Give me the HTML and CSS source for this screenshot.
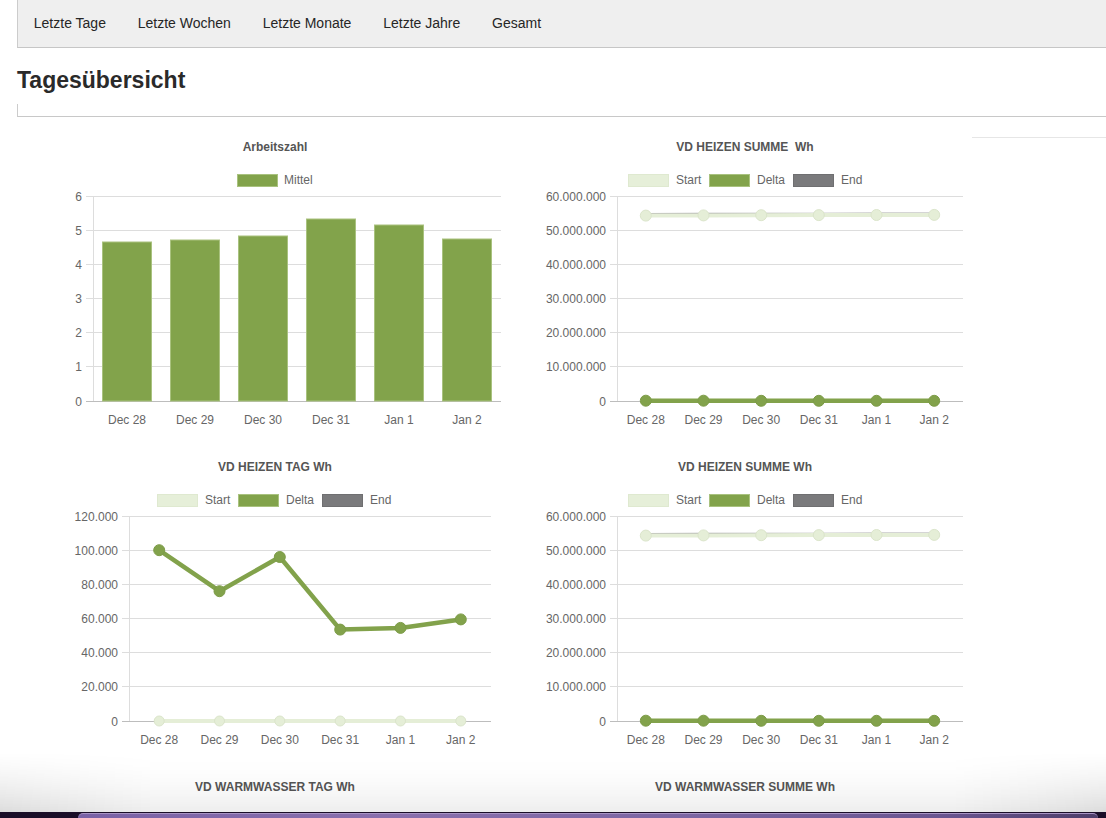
FILE: index.html
```html
<!DOCTYPE html>
<html lang="de">
<head>
<meta charset="utf-8">
<title>Tagesübersicht</title>
<link rel="stylesheet" href="styles.css">
</head>
<body>
<nav class="nav">
  <a class="nav-item">Letzte Tage</a>
  <a class="nav-item">Letzte Wochen</a>
  <a class="nav-item">Letzte Monate</a>
  <a class="nav-item">Letzte Jahre</a>
  <a class="nav-item">Gesamt</a>
</nav>
<h1 class="page-title">Tagesübersicht</h1>
<div class="rule"></div>

<main class="charts">
  <!-- Chart 1: Arbeitszahl -->
  <svg class="chart" width="470" height="320" viewBox="0 0 470 320">
    <text class="ct" x="235" y="33.5">Arbeitszahl</text>
    <rect class="lg-delta" x="197.5" y="57.5" width="40" height="12"/>
    <text class="lt" x="244" y="67">Mittel</text>
    <g class="grid">
      <line x1="46" x2="461" y1="79.5" y2="79.5"/>
      <line x1="46" x2="461" y1="113.5" y2="113.5"/>
      <line x1="46" x2="461" y1="147.5" y2="147.5"/>
      <line x1="46" x2="461" y1="181.5" y2="181.5"/>
      <line x1="46" x2="461" y1="215.5" y2="215.5"/>
      <line x1="46" x2="461" y1="249.5" y2="249.5"/>
      <line x1="53.5" x2="53.5" y1="79" y2="284"/>
    </g>
    <line class="zero" x1="46" x2="461" y1="284.5" y2="284.5"/>
    <g class="yl">
      <text x="42" y="83.5">6</text>
      <text x="42" y="117.7">5</text>
      <text x="42" y="151.8">4</text>
      <text x="42" y="186">3</text>
      <text x="42" y="220.2">2</text>
      <text x="42" y="254.3">1</text>
      <text x="42" y="288.5">0</text>
    </g>
    <g class="bars">
      <rect x="62.5" y="125" width="49" height="159"/>
      <rect x="130.5" y="123" width="49" height="161"/>
      <rect x="198.5" y="119" width="49" height="165"/>
      <rect x="266.5" y="102" width="49" height="182"/>
      <rect x="334.5" y="108" width="49" height="176"/>
      <rect x="402.5" y="122" width="49" height="162"/>
    </g>
    <g class="xl">
      <text x="87" y="306.5">Dec 28</text>
      <text x="155" y="306.5">Dec 29</text>
      <text x="223" y="306.5">Dec 30</text>
      <text x="291" y="306.5">Dec 31</text>
      <text x="359" y="306.5">Jan 1</text>
      <text x="427" y="306.5">Jan 2</text>
    </g>
  </svg>

  <!-- Chart 2: VD HEIZEN SUMME  Wh -->
  <svg class="chart" width="462" height="320" viewBox="0 0 462 320">
    <text class="ct" x="235" y="33.5">VD HEIZEN SUMME&#160; Wh</text>
    <rect class="lg-start" x="118.5" y="57.5" width="40" height="12"/>
    <text class="lt" x="166" y="67">Start</text>
    <rect class="lg-delta" x="199.5" y="57.5" width="40" height="12"/>
    <text class="lt" x="247" y="67">Delta</text>
    <rect class="lg-end" x="283.5" y="57.5" width="40" height="12"/>
    <text class="lt" x="331" y="67">End</text>
    <g class="grid">
      <line x1="100" x2="453" y1="79.5" y2="79.5"/>
      <line x1="100" x2="453" y1="113.5" y2="113.5"/>
      <line x1="100" x2="453" y1="147.5" y2="147.5"/>
      <line x1="100" x2="453" y1="181.5" y2="181.5"/>
      <line x1="100" x2="453" y1="215.5" y2="215.5"/>
      <line x1="100" x2="453" y1="249.5" y2="249.5"/>
      <line x1="107.5" x2="107.5" y1="79" y2="284"/>
    </g>
    <line class="zero" x1="100" x2="453" y1="284.5" y2="284.5"/>
    <g class="yl">
      <text x="96" y="83.5">60.000.000</text>
      <text x="96" y="117.7">50.000.000</text>
      <text x="96" y="151.8">40.000.000</text>
      <text x="96" y="186">30.000.000</text>
      <text x="96" y="220.2">20.000.000</text>
      <text x="96" y="254.3">10.000.000</text>
      <text x="96" y="288.5">0</text>
    </g>
    <polyline class="l-end" points="135.8,97.2 193.5,97.1 251.2,97 308.8,96.9 366.5,96.8 424.2,96.7"/>
    <polyline class="l-delta" points="135.8,283.7 193.5,283.7 251.2,283.8 308.8,283.8 366.5,283.8 424.2,283.8"/>
    <g class="p-delta">
      <circle cx="135.8" cy="283.7" r="5.5"/><circle cx="193.5" cy="283.7" r="5.5"/><circle cx="251.2" cy="283.8" r="5.5"/>
      <circle cx="308.8" cy="283.8" r="5.5"/><circle cx="366.5" cy="283.8" r="5.5"/><circle cx="424.2" cy="283.8" r="5.5"/>
    </g>
    <polyline class="l-start" points="135.8,98.6 193.5,98.4 251.2,98.2 308.8,98.1 366.5,98 424.2,97.9"/>
    <g class="p-start">
      <circle cx="135.8" cy="98.6" r="5.5"/><circle cx="193.5" cy="98.4" r="5.5"/><circle cx="251.2" cy="98.2" r="5.5"/>
      <circle cx="308.8" cy="98.1" r="5.5"/><circle cx="366.5" cy="98" r="5.5"/><circle cx="424.2" cy="97.9" r="5.5"/>
    </g>
    <g class="xl">
      <text x="135.8" y="306.5">Dec 28</text>
      <text x="193.5" y="306.5">Dec 29</text>
      <text x="251.2" y="306.5">Dec 30</text>
      <text x="308.8" y="306.5">Dec 31</text>
      <text x="366.5" y="306.5">Jan 1</text>
      <text x="424.2" y="306.5">Jan 2</text>
    </g>
  </svg>

  <div class="side"><div class="side-line"></div></div>

  <!-- Chart 3: VD HEIZEN TAG Wh -->
  <svg class="chart" width="470" height="320" viewBox="0 0 470 320">
    <text class="ct" x="235" y="33.5">VD HEIZEN TAG Wh</text>
    <rect class="lg-start" x="117.5" y="57.5" width="40" height="12"/>
    <text class="lt" x="165" y="67">Start</text>
    <rect class="lg-delta" x="198.5" y="57.5" width="40" height="12"/>
    <text class="lt" x="246" y="67">Delta</text>
    <rect class="lg-end" x="282.5" y="57.5" width="40" height="12"/>
    <text class="lt" x="330" y="67">End</text>
    <g class="grid">
      <line x1="82" x2="451" y1="79.5" y2="79.5"/>
      <line x1="82" x2="451" y1="113.5" y2="113.5"/>
      <line x1="82" x2="451" y1="147.5" y2="147.5"/>
      <line x1="82" x2="451" y1="181.5" y2="181.5"/>
      <line x1="82" x2="451" y1="215.5" y2="215.5"/>
      <line x1="82" x2="451" y1="249.5" y2="249.5"/>
      <line x1="89.5" x2="89.5" y1="79" y2="284"/>
    </g>
    <line class="zero" x1="82" x2="451" y1="284.5" y2="284.5"/>
    <g class="yl">
      <text x="78" y="83.5">120.000</text>
      <text x="78" y="117.7">100.000</text>
      <text x="78" y="151.8">80.000</text>
      <text x="78" y="186">60.000</text>
      <text x="78" y="220.2">40.000</text>
      <text x="78" y="254.3">20.000</text>
      <text x="78" y="288.5">0</text>
    </g>
    <polyline class="l-delta" points="119.2,113.2 179.5,154.2 239.8,120 300.2,192.6 360.5,190.9 420.8,182.4"/>
    <g class="p-delta">
      <circle cx="119.2" cy="113.2" r="5.5"/><circle cx="179.5" cy="154.2" r="5.5"/><circle cx="239.8" cy="120" r="5.5"/>
      <circle cx="300.2" cy="192.6" r="5.5"/><circle cx="360.5" cy="190.9" r="5.5"/><circle cx="420.8" cy="182.4" r="5.5"/>
    </g>
    <polyline class="l-start" points="119.2,284 179.5,284 239.8,284 300.2,284 360.5,284 420.8,284"/>
    <g class="p-start">
      <circle cx="119.2" cy="284" r="5"/><circle cx="179.5" cy="284" r="5"/><circle cx="239.8" cy="284" r="5"/>
      <circle cx="300.2" cy="284" r="5"/><circle cx="360.5" cy="284" r="5"/><circle cx="420.8" cy="284" r="5"/>
    </g>
    <g class="xl">
      <text x="119.2" y="306.5">Dec 28</text>
      <text x="179.5" y="306.5">Dec 29</text>
      <text x="239.8" y="306.5">Dec 30</text>
      <text x="300.2" y="306.5">Dec 31</text>
      <text x="360.5" y="306.5">Jan 1</text>
      <text x="420.8" y="306.5">Jan 2</text>
    </g>
  </svg>

  <!-- Chart 4: VD HEIZEN SUMME Wh -->
  <svg class="chart" width="462" height="320" viewBox="0 0 462 320">
    <text class="ct" x="235" y="33.5">VD HEIZEN SUMME Wh</text>
    <rect class="lg-start" x="118.5" y="57.5" width="40" height="12"/>
    <text class="lt" x="166" y="67">Start</text>
    <rect class="lg-delta" x="199.5" y="57.5" width="40" height="12"/>
    <text class="lt" x="247" y="67">Delta</text>
    <rect class="lg-end" x="283.5" y="57.5" width="40" height="12"/>
    <text class="lt" x="331" y="67">End</text>
    <g class="grid">
      <line x1="100" x2="453" y1="79.5" y2="79.5"/>
      <line x1="100" x2="453" y1="113.5" y2="113.5"/>
      <line x1="100" x2="453" y1="147.5" y2="147.5"/>
      <line x1="100" x2="453" y1="181.5" y2="181.5"/>
      <line x1="100" x2="453" y1="215.5" y2="215.5"/>
      <line x1="100" x2="453" y1="249.5" y2="249.5"/>
      <line x1="107.5" x2="107.5" y1="79" y2="284"/>
    </g>
    <line class="zero" x1="100" x2="453" y1="284.5" y2="284.5"/>
    <g class="yl">
      <text x="96" y="83.5">60.000.000</text>
      <text x="96" y="117.7">50.000.000</text>
      <text x="96" y="151.8">40.000.000</text>
      <text x="96" y="186">30.000.000</text>
      <text x="96" y="220.2">20.000.000</text>
      <text x="96" y="254.3">10.000.000</text>
      <text x="96" y="288.5">0</text>
    </g>
    <polyline class="l-end" points="135.8,97.2 193.5,97.1 251.2,97 308.8,96.9 366.5,96.8 424.2,96.7"/>
    <polyline class="l-delta" points="135.8,283.7 193.5,283.7 251.2,283.8 308.8,283.8 366.5,283.8 424.2,283.8"/>
    <g class="p-delta">
      <circle cx="135.8" cy="283.7" r="5.5"/><circle cx="193.5" cy="283.7" r="5.5"/><circle cx="251.2" cy="283.8" r="5.5"/>
      <circle cx="308.8" cy="283.8" r="5.5"/><circle cx="366.5" cy="283.8" r="5.5"/><circle cx="424.2" cy="283.8" r="5.5"/>
    </g>
    <polyline class="l-start" points="135.8,98.6 193.5,98.4 251.2,98.2 308.8,98.1 366.5,98 424.2,97.9"/>
    <g class="p-start">
      <circle cx="135.8" cy="98.6" r="5.5"/><circle cx="193.5" cy="98.4" r="5.5"/><circle cx="251.2" cy="98.2" r="5.5"/>
      <circle cx="308.8" cy="98.1" r="5.5"/><circle cx="366.5" cy="98" r="5.5"/><circle cx="424.2" cy="97.9" r="5.5"/>
    </g>
    <g class="xl">
      <text x="135.8" y="306.5">Dec 28</text>
      <text x="193.5" y="306.5">Dec 29</text>
      <text x="251.2" y="306.5">Dec 30</text>
      <text x="308.8" y="306.5">Dec 31</text>
      <text x="366.5" y="306.5">Jan 1</text>
      <text x="424.2" y="306.5">Jan 2</text>
    </g>
  </svg>

  <div class="side"></div>

  <!-- Row 3 (cut off) -->
  <svg class="chart" width="470" height="120" viewBox="0 0 470 120">
    <text class="ct" x="235" y="33.5">VD WARMWASSER TAG Wh</text>
  </svg>
  <svg class="chart" width="462" height="120" viewBox="0 0 462 120">
    <text class="ct" x="235" y="33.5">VD WARMWASSER SUMME Wh</text>
  </svg>
  <div class="side"></div>
</main>

<div class="win-shadow"></div>
<div class="dock-strip"><div class="dock"></div></div>
</body>
</html>
```

FILE: styles.css
```css
html, body {
  margin: 0;
  padding: 0;
  background: #ffffff;
}

body {
  font-family: "Liberation Sans", Arial, sans-serif;
  color: #333333;
  overflow: hidden;
}

.nav {
  display: flex;
  margin-left: 17px;
  height: 47px;
  background: #efefef;
  border-left: 1px solid #cccccc;
  border-bottom: 1px solid #c6c6c6;
}

.nav-item {
  display: block;
  padding: 0 16px 0 15.8px;
  line-height: 46px;
  font-size: 14px;
  color: #262626;
  text-decoration: none;
}

.page-title {
  margin: 20px 0 0 17px;
  font-size: 23px;
  line-height: 25px;
  font-weight: bold;
  color: #2a2a2a;
}

.rule {
  margin: 11px 0 0 17px;
  height: 12px;
  border-left: 1px solid #cccccc;
  border-bottom: 1px solid #c8c8c8;
}

.charts {
  display: grid;
  grid-template-columns: 470px 462px 1fr;
  grid-auto-rows: 320px;
  padding-left: 40px;
}

.chart {
  display: block;
  font-family: "Liberation Sans", Arial, sans-serif;
}

.side-line {
  margin-top: 20px;
  border-top: 1px solid #e6e6e6;
}

.ct {
  font-size: 12px;
  font-weight: bold;
  fill: #555555;
  text-anchor: middle;
}

.lt {
  font-size: 12px;
  fill: #666666;
}

.yl text {
  font-size: 12px;
  fill: #666666;
  text-anchor: end;
}

.xl text {
  font-size: 12px;
  fill: #666666;
  text-anchor: middle;
}

.grid line {
  stroke: #dddddd;
  stroke-width: 1;
}

.zero {
  stroke: #bdbdbd;
  stroke-width: 1;
}

.bars rect {
  fill: #82a34b;
  stroke: #a9c27f;
  stroke-width: 1;
}

.lg-delta {
  fill: #82a34b;
  stroke: #a9c27f;
  stroke-width: 1;
}

.lg-start {
  fill: #e6efd9;
  stroke: #dfe9d0;
  stroke-width: 1;
}

.lg-end {
  fill: #7a7a7c;
  stroke: #6f6f71;
  stroke-width: 1;
}

.l-delta {
  fill: none;
  stroke: #82a24b;
  stroke-width: 4.5;
  stroke-linejoin: round;
}

.p-delta circle {
  fill: #82a24b;
  stroke: #7d9c48;
  stroke-width: 1;
}

.l-start {
  fill: none;
  stroke: #e5eed7;
  stroke-width: 4;
  stroke-linejoin: round;
}

.p-start circle {
  fill: #e5eed7;
  stroke: #dbe5cb;
  stroke-width: 1;
}

.l-end {
  fill: none;
  stroke: #ababab;
  stroke-width: 2.5;
}

.win-shadow {
  position: fixed;
  left: 0;
  right: 0;
  bottom: 6px;
  height: 60px;
  pointer-events: none;
  background:
    linear-gradient(to right, rgba(0,0,0,0.07), rgba(0,0,0,0) 14%, rgba(0,0,0,0) 86%, rgba(0,0,0,0.07)),
    linear-gradient(to bottom, rgba(0,0,0,0), rgba(0,0,0,0.07));
  -webkit-mask-image: linear-gradient(to bottom, transparent, #000);
  mask-image: linear-gradient(to bottom, transparent, #000);
}

.dock-strip {
  position: fixed;
  left: 0;
  right: 0;
  bottom: 0;
  height: 6px;
  background: #1a0e28;
}

.dock {
  position: absolute;
  left: 78px;
  right: 8px;
  top: 1px;
  bottom: 0;
  border-radius: 10px 10px 0 0;
  background: linear-gradient(to right, #7a62a6, #8a70ad 30%, #7c66a3 60%, #6a5590 85%, #4e3e6a);
  border-top: 1px solid #a894c4;
}
```
